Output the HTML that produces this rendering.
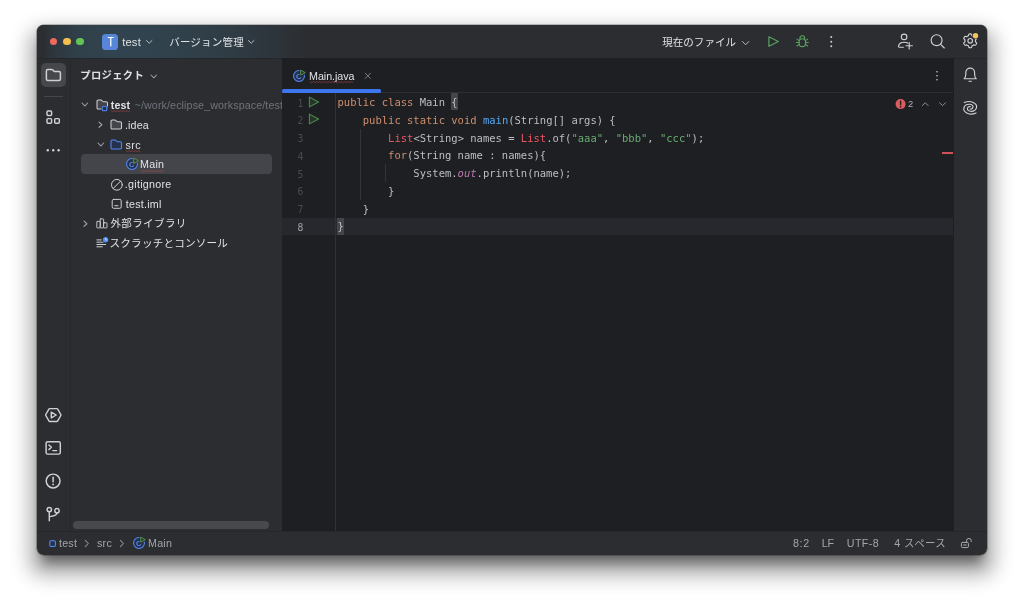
<!DOCTYPE html>
<html lang="ja">
<head>
<meta charset="utf-8">
<title>test – Main.java</title>
<style>
*{box-sizing:border-box;margin:0;padding:0}
html,body{width:1024px;height:604px;overflow:hidden;background:#fff}
body{position:relative;font-family:"Liberation Sans","Noto Sans CJK JP",sans-serif;font-size:10.7px;color:#dfe1e5}
.abs{position:absolute}
#shadow{position:absolute;left:37px;top:25px;width:950px;height:530px;border-radius:6.5px;box-shadow:0 0 0 .6px rgba(0,0,0,.4),0 1px 4px rgba(0,0,0,.12),0 13.3px 12px -6px rgba(0,0,0,.42),0 12.7px 19px 8px rgba(0,0,0,.3)}
#win{position:absolute;left:37px;top:25px;width:950px;height:530px;background:#2b2d30;border-radius:6.5px;overflow:hidden}
#pg{position:absolute;left:-37px;top:-25px;width:1024px;height:604px;transform:translateZ(0);will-change:transform}
#pg div,#pg span.t{position:absolute}
#toolbar{left:37px;top:25px;width:950px;height:33px;background:linear-gradient(90deg,#2b2d30 0px,#2b2f33 7px,#2d353b 14px,#2f3b44 28px,#30404a 42px,#31434e 70px,#31434e 110px,#30414b 140px,#303f48 165px,#2f3c44 195px,#2e3840 215px,#2d353c 235px,#2c3034 255px,#2b2d30 275px)}
#tbline{left:37px;top:58px;width:950px;height:1px;background:#242629}
#lsline{left:70px;top:58px;width:1px;height:473px;background:#25272a}
#rsline{left:952.6px;top:58px;width:1px;height:473px;background:#1e1f22}
#editor{left:282px;top:58px;width:671.6px;height:473px;background:#1e1f22;overflow:hidden}
#stline{left:37px;top:531px;width:950px;height:1px;background:#25272a}
.t{white-space:nowrap;line-height:14px;height:14px}
.b{font-weight:bold}
.g{color:#6f737a}
.st{color:#a2a5ab}
.code{font-family:"DejaVu Sans Mono","Liberation Mono",monospace;font-size:10.51px;line-height:17.76px;height:17.76px;color:#bcbec4;white-space:pre}
.ln{font-family:"DejaVu Sans Mono","Liberation Mono",monospace;font-size:9.7px;line-height:17.76px;height:17.76px;color:#474b53;text-align:right}
.ln.cur{color:#a1a3ab}
.k{color:#cf8e6d}.m{color:#56a8f5}.r{color:#ea5663}.s{color:#6aab73}.f{color:#b97bae;font-style:italic}
.bh{background:#43454a}
/*FIT*/
#t_test{letter-spacing:0.17px;margin-left:-0.1px}
#t_root{letter-spacing:0.13px;margin-left:-0.1px}
#t_idea{letter-spacing:0.16px;margin-left:-1.0px}
#t_src{letter-spacing:0.38px;margin-left:-0.3px}
#t_main{letter-spacing:0.25px;margin-left:-0.8px}
#t_git{letter-spacing:0.28px;margin-left:-1.1px}
#t_iml{letter-spacing:0.25px;margin-left:-0.1px}
#t_tab{letter-spacing:-0.06px;margin-left:-0.8px}
#t_s1{letter-spacing:0.18px;margin-left:-0.1px}
#t_s2{letter-spacing:0.35px;margin-left:-0.4px}
#t_s3{letter-spacing:0.25px;margin-left:-0.8px}
#t_s4{letter-spacing:0.73px;margin-left:-0.4px}
#t_s5{letter-spacing:-0.15px;margin-left:-0.8px}
#t_s6{letter-spacing:0.40px;margin-left:-0.9px}
#t_s7{letter-spacing:0.43px;margin-left:-0.1px}
#t_path{letter-spacing:0.11px;margin-left:0.0px}
#t_vcs{letter-spacing:0.19px;margin-left:-0.8px}
#t_cur{letter-spacing:0.02px;margin-left:-0.4px}
#t_proj{letter-spacing:0.32px;margin-left:-0.9px}
#t_lib{letter-spacing:0.40px;margin-left:-0.2px}
#t_scr{letter-spacing:0.17px;margin-left:-1.0px}
/*ENDFIT*/
svg{position:absolute;overflow:visible}
.ic{fill:none;stroke:#ced0d6;stroke-linecap:round;stroke-linejoin:round}
</style>
</head>
<body>
<div id="shadow"></div>
<div id="win"><div id="pg">
<!--TOOLBAR-->
<div id="toolbar"></div>
<div id="tbline"></div>
<div style="left:49.55px;top:37.6px;width:7.8px;height:7.8px;border-radius:50%;background:#ec6a5e"></div>
<div style="left:62.8px;top:37.6px;width:7.8px;height:7.8px;border-radius:50%;background:#f4bf4f"></div>
<div style="left:76px;top:37.6px;width:7.8px;height:7.8px;border-radius:50%;background:#61c554"></div>
<div style="left:101.8px;top:33.5px;width:16.3px;height:16.5px;border-radius:3.6px;background:linear-gradient(200deg,#5389d6,#5b83db)"></div>
<span class="t" id="tT" style="left:106.5px;top:34.7px;font-size:12.2px;color:#fff;transform:scaleX(.8);-webkit-text-stroke:.25px #fff">T</span>
<span class="t" id="t_test" style="left:122.3px;top:34.7px;font-size:11.2px">test</span>
<svg style="left:146.3px;top:39.8px" width="6.4" height="3.8" viewBox="0 0 6.4 3.8"><path class="ic" stroke-width="1" style="stroke:#b9bcc2" d="M0.4 0.5L3.2 3.3L6 0.5"/></svg>
<span class="t" id="t_vcs" style="left:170px;top:35px;font-size:10.5px">バージョン管理</span>
<svg style="left:248.4px;top:39.8px" width="6.4" height="3.8" viewBox="0 0 6.4 3.8"><path class="ic" stroke-width="1" style="stroke:#b9bcc2" d="M0.4 0.5L3.2 3.3L6 0.5"/></svg>
<span class="t" id="t_cur" style="left:662.7px;top:35px;font-size:10.5px">現在のファイル</span>
<svg style="left:742px;top:40.5px" width="7.2" height="4.2" viewBox="0 0 7.2 4.2"><path class="ic" stroke-width="1" style="stroke:#b9bcc2" d="M0.4 0.5L3.6 3.7L6.8 0.5"/></svg>
<svg style="left:767px;top:35px" width="13" height="13" viewBox="767 35 13 13"><path d="M768.9 36.8L778.3 41.55L768.9 46.3Z" fill="none" stroke="#5ba160" stroke-width="1.2" stroke-linejoin="round"/></svg>
<svg id="bug" style="left:795px;top:34px" width="15" height="14" viewBox="795 34 15 14"><g fill="none" stroke="#5ba160" stroke-width="1.1" stroke-linecap="round" stroke-linejoin="round"><path d="M799.9 38.7V38.4A2.4 2.6 0 0 1 804.7 38.4V38.7"/><rect x="799.1" y="38.7" width="6.4" height="7.9" rx="3.1"/><path d="M799.1 40.6L796.9 39.1M799.1 42.5H796.3M799.2 44.4L796.9 46M805.5 40.6L807.7 39.1M805.5 42.5H808.3M805.4 44.4L807.7 46"/></g></svg>
<svg style="left:829px;top:35px" width="5" height="13" viewBox="829 35 5 13"><g fill="#ced0d6"><circle cx="831.25" cy="37.1" r="1"/><circle cx="831.25" cy="41.7" r="1"/><circle cx="831.25" cy="46.3" r="1"/></g></svg>
<svg style="left:897px;top:33px" width="16" height="17" viewBox="897 33 16 17"><g class="ic" stroke-width="1.15"><circle cx="904.1" cy="36.9" r="2.75"/><path d="M903.4 47.2H899.4Q898.4 47.2 898.5 46.2C898.9 43.8 901.2 42.2 904.1 42.2C905.5 42.2 906.8 42.5 907.8 43.1"/><path d="M906 45.7H912.4M909.2 42.5V48.9"/></g></svg>
<svg style="left:930px;top:33px" width="16" height="17" viewBox="930 33 16 17"><g class="ic" stroke-width="1.15"><circle cx="936.6" cy="40.2" r="5.45"/><path d="M940.6 44.3L944.3 48"/></g></svg>
<svg style="left:963px;top:33.3px" width="15" height="16" viewBox="0 0 15 16"><g class="ic" stroke-width="1.15"><path d="M12.50 7.80L12.49 8.15L12.45 8.49L12.58 8.87L13.09 9.38L13.56 9.96L13.57 10.44L13.39 10.85L13.18 11.25L12.94 11.63L12.67 12.00L12.25 12.23L11.51 12.11L10.82 11.93L10.43 12.00L10.14 12.21L9.85 12.39L9.54 12.55L9.23 12.70L8.96 13.00L8.78 13.69L8.51 14.38L8.10 14.64L7.65 14.69L7.20 14.70L6.75 14.69L6.30 14.64L5.89 14.38L5.62 13.69L5.44 13.00L5.17 12.70L4.86 12.55L4.55 12.39L4.26 12.21L3.97 12.00L3.58 11.93L2.89 12.11L2.15 12.23L1.73 12.00L1.46 11.63L1.22 11.25L1.01 10.85L0.83 10.44L0.84 9.96L1.31 9.38L1.82 8.87L1.95 8.49L1.91 8.15L1.90 7.80L1.91 7.45L1.95 7.11L1.82 6.73L1.31 6.22L0.84 5.64L0.83 5.16L1.01 4.75L1.22 4.35L1.46 3.97L1.73 3.60L2.15 3.37L2.89 3.49L3.58 3.67L3.97 3.60L4.26 3.39L4.55 3.21L4.86 3.05L5.17 2.90L5.44 2.60L5.62 1.91L5.89 1.22L6.30 0.96L6.75 0.91L7.20 0.90L7.65 0.91L8.10 0.96L8.51 1.22L8.78 1.91L8.96 2.60L9.23 2.90L9.54 3.05L9.85 3.21L10.14 3.39L10.43 3.60L10.82 3.67L11.51 3.49L12.25 3.37L12.67 3.60L12.94 3.97L13.18 4.35L13.39 4.75L13.57 5.16L13.56 5.64L13.09 6.22L12.58 6.73L12.45 7.11L12.49 7.45Z"/><circle cx="7.2" cy="7.8" r="2.3"/></g><circle cx="12.5" cy="2.7" r="3.3" fill="#2b2d30"/><circle cx="12.5" cy="2.7" r="2.7" fill="#f2c55c"/></svg>

<!--LSTRIPE-->
<div id="lsline"></div>
<div style="left:41px;top:62.6px;width:25px;height:24.6px;border-radius:5px;background:#45474b"></div>
<svg style="left:45px;top:68px" width="17" height="14" viewBox="45 68 17 14"><path class="ic" stroke-width="1.5" d="M46.4 70.9Q46.4 69.4 47.9 69.4H51.6Q52.2 69.4 52.6 69.8L54 71.2Q54.4 71.6 55 71.6H58.9Q60.4 71.6 60.4 73.1V78.9Q60.4 80.4 58.9 80.4H47.9Q46.4 80.4 46.4 78.9Z"/></svg>
<div style="left:43.5px;top:96px;width:19.6px;height:1px;background:#43454a"></div>
<svg style="left:46px;top:110px" width="15" height="15" viewBox="46 110 15 15"><g class="ic" stroke-width="1.45"><rect x="47" y="110.9" width="4.6" height="4.6" rx="1"/><rect x="47" y="118.6" width="4.6" height="4.6" rx="1"/><rect x="54.7" y="118.6" width="4.6" height="4.6" rx="1"/></g></svg>
<svg style="left:46px;top:148px" width="15" height="5" viewBox="46 148 15 5"><g fill="#ced0d6"><circle cx="47.8" cy="150.3" r="1.2"/><circle cx="53.2" cy="150.3" r="1.2"/><circle cx="58.6" cy="150.3" r="1.2"/></g></svg>
<svg style="left:45px;top:407px" width="17" height="16" viewBox="45 407 17 16"><g class="ic" stroke-width="1.45"><path d="M49.8 408.6H56.8Q57.4 408.6 57.7 409.1L60.8 414.5Q61.1 415 60.8 415.5L57.7 420.9Q57.4 421.4 56.8 421.4H49.8Q49.2 421.4 48.9 420.9L45.8 415.5Q45.5 415 45.8 414.5L48.9 409.1Q49.2 408.6 49.8 408.6Z"/><path d="M51.3 412.1L56.2 415L51.3 417.9Z"/></g></svg>
<svg style="left:45px;top:440px" width="17" height="16" viewBox="45 440 17 16"><g class="ic" stroke-width="1.45"><rect x="46.1" y="441.7" width="14.2" height="12.4" rx="1.6"/><path d="M48.9 445L51.4 447.3L48.9 449.6M52.8 450.6H56.6"/></g></svg>
<svg style="left:45px;top:473px" width="17" height="16" viewBox="45 473 17 16"><g class="ic" stroke-width="1.45"><circle cx="53.1" cy="481" r="6.9"/><path d="M53.1 477.3V481.8" stroke-width="1.5"/></g><circle cx="53.1" cy="484.4" r="0.95" fill="#ced0d6"/></svg>
<svg style="left:46px;top:506px" width="15" height="16" viewBox="46 506 15 16"><g class="ic" stroke-width="1.45"><circle cx="49.3" cy="509.6" r="2.2"/><circle cx="57" cy="510.8" r="2.2"/><path d="M49.3 511.8V520.8M57 513C57 515.6 53 516.2 49.3 516.6"/></g></svg>
<!--PROJECT-->
<span class="t b" id="t_proj" style="left:81.2px;top:68.5px;font-size:10.3px">プロジェクト</span>
<svg style="left:149.5px;top:74.3px" width="7.6" height="4.8" viewBox="-1 -1 7.6 4.8"><path d="M0 0L2.8 2.8L5.6 0" fill="none" stroke="#9c9fa6" stroke-width="1.05" stroke-linecap="round" stroke-linejoin="round"/></svg>
<div style="left:80.5px;top:154px;width:191.5px;height:19.6px;border-radius:4px;background:#43454a"></div>
<svg style="left:81.2px;top:102.4px" width="7.7" height="5.0" viewBox="-1 -1 7.7 5.0"><path d="M0 0L2.85 3.0L5.7 0" fill="none" stroke="#a3a6ad" stroke-width="1.05" stroke-linecap="round" stroke-linejoin="round"/></svg>
<svg style="left:95.8px;top:99.0px" width="13" height="11.2" viewBox="-1 -1 13 11.2"><path d="M0 1.3Q0 0 1.3 0H3.8Q4.3 0 4.7 .4L5.8 1.5Q6.1 1.8 6.6 1.8H9.2Q10.5 1.8 10.5 3.1V7.8Q10.5 9.1 9.2 9.1H1.3Q0 9.1 0 7.8Z" fill="#43454a" stroke="#ced0d6" stroke-width="1.05" stroke-linejoin="round"/></svg>
<svg style="left:101.4px;top:104.8px" width="7.4" height="7.4" viewBox="0 0 7.4 7.4"><rect x=".4" y=".4" width="6.4" height="6.4" rx="1.6" fill="#2b2d30"/><rect x="1.25" y="1.25" width="4.6" height="4.6" rx="1" fill="#25324d" stroke="#548af7" stroke-width="1.05"/></svg>
<span class="t b" id="t_root" style="left:110.8px;top:98.2px">test</span>
<svg style="left:110.8px;top:110.0px" width="20.2" height="2.4" viewBox="0 -.5 20.2 2.4"><path d="M0.0 0.0L1.6 1.3L3.2 0.0L4.8 1.3L6.4 0.0L8.0 1.3L9.6 0.0L11.2 1.3L12.8 0.0L14.4 1.3L16.0 0.0L17.6 1.3L19.2 0.0" fill="none" stroke="#c8504f" stroke-opacity="0.7" stroke-width=".75"/></svg>
<div style="left:134.6px;top:98.2px;width:147.4px;height:14px;overflow:hidden"><span class="t g" id="t_path" style="left:0;top:0">~/work/eclipse_workspace/test</span></div>
<svg style="left:97.8px;top:121.2px" width="4.9" height="7.5" viewBox="-1 -1 4.9 7.5"><path d="M0 0L2.9 2.75L0 5.5" fill="none" stroke="#a3a6ad" stroke-width="1.05" stroke-linecap="round" stroke-linejoin="round"/></svg>
<svg style="left:110.3px;top:119.1px" width="13" height="11.2" viewBox="-1 -1 13 11.2"><path d="M0 1.3Q0 0 1.3 0H3.8Q4.3 0 4.7 .4L5.8 1.5Q6.1 1.8 6.6 1.8H9.2Q10.5 1.8 10.5 3.1V7.8Q10.5 9.1 9.2 9.1H1.3Q0 9.1 0 7.8Z" fill="#43454a" stroke="#ced0d6" stroke-width="1.05" stroke-linejoin="round"/></svg>
<span class="t" id="t_idea" style="left:125.9px;top:117.9px">.idea</span>
<svg style="left:96.5px;top:141.8px" width="7.7" height="5.0" viewBox="-1 -1 7.7 5.0"><path d="M0 0L2.85 3.0L5.7 0" fill="none" stroke="#a3a6ad" stroke-width="1.05" stroke-linecap="round" stroke-linejoin="round"/></svg>
<svg style="left:110.3px;top:138.8px" width="13" height="11.2" viewBox="-1 -1 13 11.2"><path d="M0 1.3Q0 0 1.3 0H3.8Q4.3 0 4.7 .4L5.8 1.5Q6.1 1.8 6.6 1.8H9.2Q10.5 1.8 10.5 3.1V7.8Q10.5 9.1 9.2 9.1H1.3Q0 9.1 0 7.8Z" fill="#25324d" stroke="#548af7" stroke-width="1.05" stroke-linejoin="round"/></svg>
<span class="t" id="t_src" style="left:125.9px;top:137.6px">src</span>
<svg style="left:125.9px;top:149.7px" width="15.4" height="2.4" viewBox="0 -.5 15.4 2.4"><path d="M0.0 0.0L1.6 1.3L3.2 0.0L4.8 1.3L6.4 0.0L8.0 1.3L9.6 0.0L11.2 1.3L12.8 0.0L14.4 1.3" fill="none" stroke="#c8504f" stroke-opacity="0.7" stroke-width=".75"/></svg>
<svg style="left:125.0px;top:157.1px" width="15" height="14" viewBox="-7 -7 15 14"><circle cx="0" cy="0" r="5.45" fill="#25324d" stroke="#548af7" stroke-width="1.05"/><text x="-0.4" y="2.6" font-family="Liberation Sans,sans-serif" font-weight="bold" font-size="7.4" text-anchor="middle" fill="#548af7">C</text><path d="M1.3 -6.6L7.4 -3.3L1.3 0Z" fill="#43454a" stroke="#43454a" stroke-width="1.6" stroke-linejoin="round"/><path d="M1.7 -5.8L6.3 -3.3L1.7 -.8Z" fill="#253627" stroke="#57965c" stroke-width=".95" stroke-linejoin="round"/></svg>
<span class="t" id="t_main" style="left:140.9px;top:157.3px">Main</span>
<svg style="left:140.9px;top:169.5px" width="23.6" height="2.4" viewBox="0 -.5 23.6 2.4"><path d="M0.0 0.0L1.6 1.3L3.2 0.0L4.8 1.3L6.4 0.0L8.0 1.3L9.6 0.0L11.2 1.3L12.8 0.0L14.4 1.3L16.0 0.0L17.6 1.3L19.2 0.0L20.8 1.3L22.4 0.0" fill="none" stroke="#c8504f" stroke-opacity="0.7" stroke-width=".75"/></svg>
<svg style="left:110px;top:177.5px" width="14" height="14" viewBox="110 177.5 14 14"><g class="ic" stroke-width="1"><circle cx="116.9" cy="184.3" r="5.4"/><path d="M113.2 188L120.6 180.6"/></g></svg>
<span class="t" id="t_git" style="left:125.9px;top:177.0px">.gitignore</span>
<svg style="left:110px;top:197px" width="14" height="14" viewBox="110 197 14 14"><g class="ic" stroke-width="1"><rect x="112.2" y="199.4" width="9" height="8.9" rx="1.4"/><path d="M114.8 205.7H118"/></g></svg>
<span class="t" id="t_iml" style="left:125.9px;top:196.7px">test.iml</span>
<svg style="left:82.5px;top:219.9px" width="4.9" height="7.5" viewBox="-1 -1 4.9 7.5"><path d="M0 0L2.9 2.75L0 5.5" fill="none" stroke="#a3a6ad" stroke-width="1.05" stroke-linecap="round" stroke-linejoin="round"/></svg>
<svg style="left:95px;top:217px" width="14" height="13" viewBox="95 217 14 13"><g class="ic" stroke-width=".9" style="stroke-linejoin:miter"><rect x="96.8" y="221.4" width="3.4" height="6.5" rx=".5"/><rect x="100.2" y="218.9" width="3.4" height="9" rx=".5"/><rect x="103.6" y="222.8" width="3.4" height="5.1" rx=".5"/></g></svg>
<span class="t" id="t_lib" style="left:110.6px;top:216.4px;font-size:10.5px">外部ライブラリ</span>
<svg style="left:95px;top:236px" width="14" height="13" viewBox="95 236 14 13"><g class="ic" stroke-width="1"><path d="M96.9 239.9H101.3M96.9 242.2H105.6M96.9 244.5H105.6M96.9 246.8H102.3"/></g><circle cx="105.6" cy="239.8" r="3.4" fill="#2b2d30"/><circle cx="105.6" cy="239.8" r="2.75" fill="#548af7"/><path d="M105.6 238.3V239.9H106.7" fill="none" stroke="#fff" stroke-width=".7" stroke-linecap="round" stroke-linejoin="round"/></svg>
<span class="t" id="t_scr" style="left:110.6px;top:236.1px;font-size:10.6px">スクラッチとコンソール</span>
<div style="left:73px;top:521.3px;width:195.5px;height:7.7px;border-radius:4px;background:#47494d"></div>
<!--EDITOR-->
<div id="editor"></div>
<!--EDITORCONTENT-->
<svg style="left:291.8px;top:69.0px" width="15" height="14" viewBox="-7 -7 15 14"><circle cx="0" cy="0" r="5.45" fill="#25324d" stroke="#548af7" stroke-width="1.05"/><text x="-0.4" y="2.6" font-family="Liberation Sans,sans-serif" font-weight="bold" font-size="7.4" text-anchor="middle" fill="#548af7">C</text><path d="M1.3 -6.6L7.4 -3.3L1.3 0Z" fill="#1e1f22" stroke="#1e1f22" stroke-width="1.6" stroke-linejoin="round"/><path d="M1.7 -5.8L6.3 -3.3L1.7 -.8Z" fill="#253627" stroke="#57965c" stroke-width=".95" stroke-linejoin="round"/></svg>
<span class="t" id="t_tab" style="left:309.9px;top:69.3px">Main.java</span>
<svg style="left:309.9px;top:81.3px" width="45.5" height="2.4" viewBox="0 -.5 45.5 2.4"><path d="M0.0 0.0L1.6 1.3L3.2 0.0L4.8 1.3L6.4 0.0L8.0 1.3L9.6 0.0L11.2 1.3L12.8 0.0L14.4 1.3L16.0 0.0L17.6 1.3L19.2 0.0L20.8 1.3L22.4 0.0L24.0 1.3L25.6 0.0L27.2 1.3L28.8 0.0L30.4 1.3L32.0 0.0L33.6 1.3L35.2 0.0L36.8 1.3L38.4 0.0L40.0 1.3L41.6 0.0L43.2 1.3" fill="none" stroke="#c8504f" stroke-opacity="0.7" stroke-width=".75"/></svg>
<svg style="left:364px;top:72px" width="8" height="8" viewBox="364 72 8 8"><path d="M365.2 73.2L370.4 78.4M370.4 73.2L365.2 78.4" fill="none" stroke="#7d8188" stroke-width="1" stroke-linecap="round"/></svg>
<div style="left:282px;top:92px;width:672px;height:1px;background:#2d2f33"></div>
<div style="left:282.3px;top:89.3px;width:98.5px;height:3.5px;border-radius:1.6px;background:#3d76ee"></div>
<svg style="left:935px;top:70px" width="4" height="12" viewBox="0 0 4 12"><g fill="#ced0d6"><circle cx="2" cy="1.8" r=".8"/><circle cx="2" cy="5.8" r=".8"/><circle cx="2" cy="9.8" r=".8"/></g></svg>
<div style="left:282px;top:217.72px;width:672px;height:17.76px;background:#26282e"></div>
<div style="left:451.3px;top:93.1px;width:6.5px;height:17.3px;background:#43454a"></div>
<div style="left:337.2px;top:217.9px;width:6.5px;height:17.3px;background:#43454a"></div>
<div style="left:335px;top:93px;width:1px;height:438px;background:#2f3135"></div>
<div style="left:359.9px;top:128.9px;width:1px;height:71.0px;background:#313438"></div>
<div style="left:385.2px;top:164.4px;width:1px;height:17.8px;background:#313438"></div>
<span class="t ln" style="left:283px;top:94.50px;width:20.3px">1</span>
<span class="t ln" style="left:283px;top:112.26px;width:20.3px">2</span>
<span class="t ln" style="left:283px;top:130.02px;width:20.3px">3</span>
<span class="t ln" style="left:283px;top:147.78px;width:20.3px">4</span>
<span class="t ln" style="left:283px;top:165.54px;width:20.3px">5</span>
<span class="t ln" style="left:283px;top:183.30px;width:20.3px">6</span>
<span class="t ln" style="left:283px;top:201.06px;width:20.3px">7</span>
<span class="t ln cur" style="left:283px;top:218.82px;width:20.3px">8</span>
<svg style="left:308px;top:95.5px" width="12" height="12" viewBox="0 0 12 12"><path d="M1.4 1.1L10.6 6L1.4 10.9Z" fill="#253627" stroke="#4f8a54" stroke-width="1.05" stroke-linejoin="round"/></svg>
<svg style="left:308px;top:113.2px" width="12" height="12" viewBox="0 0 12 12"><path d="M1.4 1.1L10.6 6L1.4 10.9Z" fill="#253627" stroke="#4f8a54" stroke-width="1.05" stroke-linejoin="round"/></svg>
<span class="t code" style="left:337.5px;top:94.00px"><span class="k">public class</span> Main {</span>
<span class="t code" style="left:337.5px;top:111.76px">    <span class="k">public static void</span> <span class="m">main</span>(String[] args) {</span>
<span class="t code" style="left:337.5px;top:129.52px">        <span class="r">List</span>&lt;String&gt; names = <span class="r">List</span>.of(<span class="s">"aaa"</span>, <span class="s">"bbb"</span>, <span class="s">"ccc"</span>);</span>
<span class="t code" style="left:337.5px;top:147.28px">        <span class="k">for</span>(String name : names){</span>
<span class="t code" style="left:337.5px;top:165.04px">            System.<span class="f">out</span>.println(name);</span>
<span class="t code" style="left:337.5px;top:182.80px">        }</span>
<span class="t code" style="left:337.5px;top:200.56px">    }</span>
<span class="t code" style="left:337.5px;top:218.32px">}</span>
<svg style="left:895px;top:99px" width="12" height="12" viewBox="895 99 12 12"><circle cx="900.6" cy="104.1" r="5" fill="#db5c5c"/><path d="M900.6 101.2V104.8" stroke="#1e1f22" stroke-width="1.35" stroke-linecap="round"/><circle cx="900.6" cy="106.9" r=".8" fill="#1e1f22"/></svg>
<span class="t" id="t_err" style="left:907.9px;top:97.3px;font-size:9.3px;color:#b0b3ba">2</span>
<svg style="left:920px;top:100px" width="30" height="10" viewBox="920 100 30 10"><path d="M922.3 105.6L925.2 102.7L928.1 105.6M939.6 102.8L942.5 105.7L945.4 102.8" fill="none" stroke="#8e9198" stroke-width="1" stroke-linecap="round" stroke-linejoin="round"/></svg>
<div style="left:941.5px;top:151.5px;width:12.1px;height:2px;background:#cf515c"></div>
<!--RSTRIPE-->
<div id="rsline"></div>
<svg style="left:962px;top:66px" width="16" height="17" viewBox="962 66 16 17"><g class="ic" stroke-width="1.15"><path d="M964.2 78.7H976.2C974.9 77.4 974.6 76.3 974.6 74.6V72.5A4.4 4.4 0 0 0 965.8 72.5V74.6C965.8 76.3 965.5 77.4 964.2 78.7Z"/><path d="M969 81.2H971.4"/></g></svg>
<svg style="left:962px;top:99px" width="16" height="17" viewBox="962 99 16 17"><g class="ic" stroke-width="1.15" transform="translate(970.2 107.8)"><path d="M-5.9-5.2C-3.5-6.3.5-6.6 3-5.4C5.6-4.2 6.8-2.2 6.3-.2C5.7 2.2 3.2 3.6.6 3.5C-1.6 3.4-3 2.2-2.8.7C-2.6-.6-1.4-1.4 0-1.2"/><path transform="rotate(180)" d="M-5.9-5.2C-3.5-6.3.5-6.6 3-5.4C5.6-4.2 6.8-2.2 6.3-.2C5.7 2.2 3.2 3.6.6 3.5C-1.6 3.4-3 2.2-2.8.7C-2.6-.6-1.4-1.4 0-1.2"/></g></svg>
<!--STATUS-->
<div id="stline"></div>
<svg style="left:48.9px;top:540px" width="8" height="8" viewBox="0 0 8 8"><rect x=".8" y=".8" width="5.6" height="5.6" rx="1.1" fill="#25324d" stroke="#548af7" stroke-width="1.05"/></svg>
<span class="t st" id="t_s1" style="left:59.2px;top:535.5px">test</span>
<svg style="left:84.2px;top:538.6px" width="6" height="9" viewBox="0 0 6 9"><path d="M1.3 1.4L4.4 4.5L1.3 7.6" fill="none" stroke="#8b8e95" stroke-width="1.05" stroke-linecap="round" stroke-linejoin="round"/></svg>
<span class="t st" id="t_s2" style="left:97.3px;top:535.5px">src</span>
<svg style="left:118.9px;top:538.6px" width="6" height="9" viewBox="0 0 6 9"><path d="M1.3 1.4L4.4 4.5L1.3 7.6" fill="none" stroke="#8b8e95" stroke-width="1.05" stroke-linecap="round" stroke-linejoin="round"/></svg>
<svg style="left:131.8px;top:536.4px" width="15" height="14" viewBox="-7 -7 15 14"><circle cx="0" cy="0" r="5.45" fill="#25324d" stroke="#548af7" stroke-width="1.05"/><text x="-0.4" y="2.6" font-family="Liberation Sans,sans-serif" font-weight="bold" font-size="7.4" text-anchor="middle" fill="#548af7">C</text><path d="M1.3 -6.6L7.4 -3.3L1.3 0Z" fill="#2b2d30" stroke="#2b2d30" stroke-width="1.6" stroke-linejoin="round"/><path d="M1.7 -5.8L6.3 -3.3L1.7 -.8Z" fill="#253627" stroke="#57965c" stroke-width=".95" stroke-linejoin="round"/></svg>
<span class="t st" id="t_s3" style="left:148.8px;top:535.5px">Main</span>
<span class="t st" id="t_s4" style="left:793.3px;top:536.4px">8:2</span>
<span class="t st" id="t_s5" style="left:822.5px;top:536.4px">LF</span>
<span class="t st" id="t_s6" style="left:847.7px;top:536.4px">UTF-8</span>
<span class="t st" id="t_s7" style="left:894.4px;top:536.4px">4 <span style="position:static;font-size:10.4px">スペース</span></span>
<svg style="left:960px;top:537px" width="13" height="12" viewBox="960 537 13 12"><g fill="none" stroke="#a9acb3" stroke-width="1" stroke-linecap="round" stroke-linejoin="round"><rect x="961.4" y="542.4" width="7" height="5.2" rx="1.1"/><path d="M966.6 542.4V540.7A2.3 2.3 0 0 1 971.2 540.7V541.6M963.6 545H966.2"/></g></svg>
</div></div>
</body>
</html>
